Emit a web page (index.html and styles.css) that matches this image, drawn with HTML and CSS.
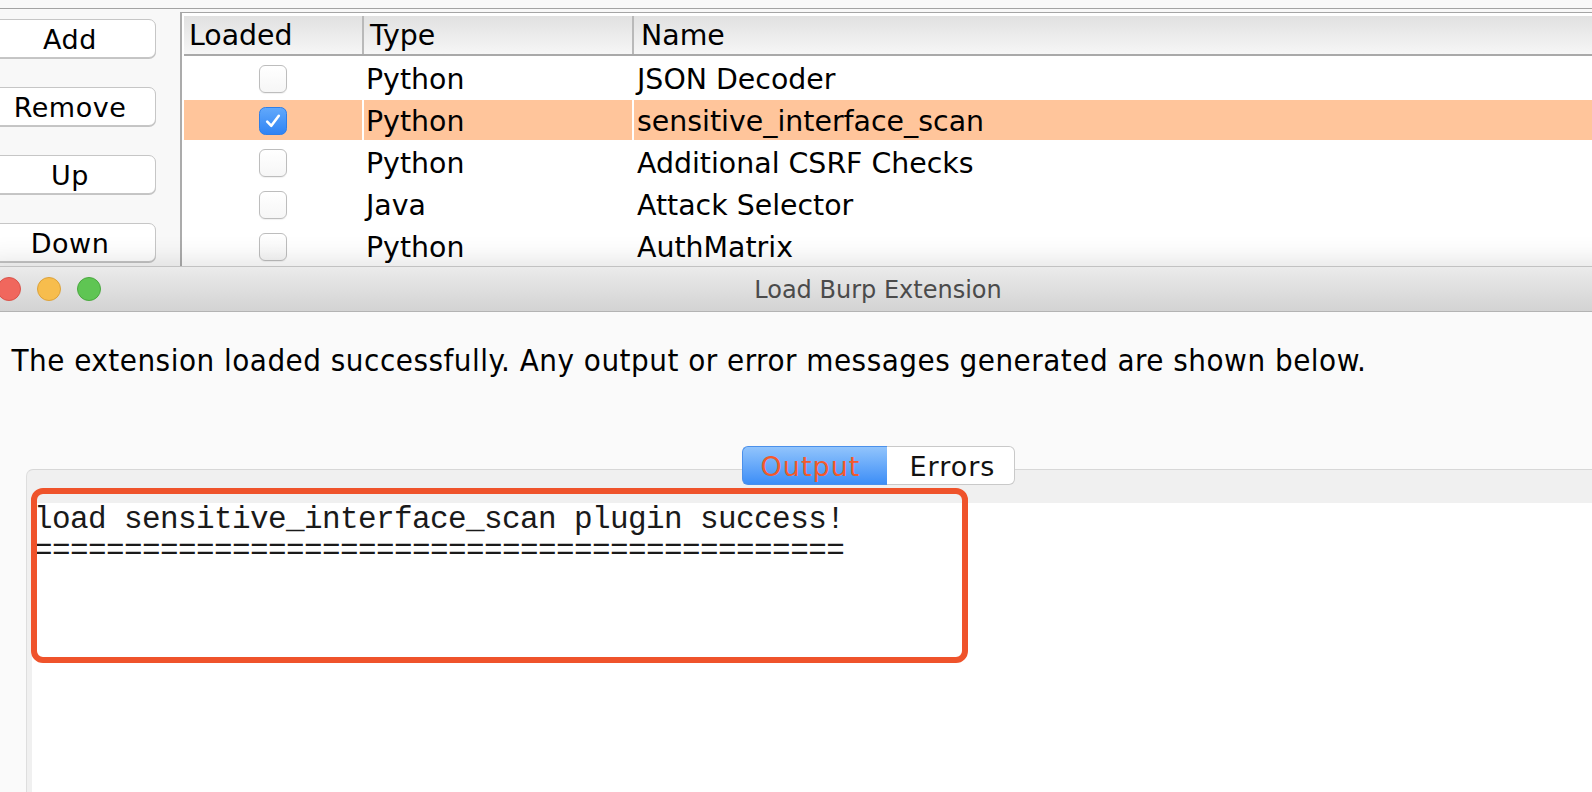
FILE: index.html
```html
<!DOCTYPE html>
<html>
<head>
<meta charset="utf-8">
<title>Burp Extensions</title>
<link rel="stylesheet" href="styles.css">
</head>
<body>
<div class="top">
  <div class="rule"></div>
  <div class="main">
    <div class="btncol">
      <div class="btn">Add</div>
      <div class="btn">Remove</div>
      <div class="btn">Up</div>
      <div class="btn">Down</div>
    </div>
    <div class="tablewrap">
      <div class="grid thead">
        <div class="th th-loaded">Loaded</div>
        <div class="th th-type">Type</div>
        <div class="th th-name">Name</div>
      </div>
      <div class="grid row">
        <div class="td chk"><span class="cb"></span></div>
        <div class="td type">Python</div>
        <div class="td name">JSON Decoder</div>
      </div>
      <div class="grid row sel">
        <div class="td chk"><svg class="cbx" width="28" height="28" viewBox="0 0 28 28"><defs><linearGradient id="g" x1="0" y1="0" x2="0" y2="1"><stop offset="0" stop-color="#62a9fb"/><stop offset="1" stop-color="#2f83f4"/></linearGradient></defs><rect x="0.5" y="0.5" width="27" height="27" rx="6" fill="url(#g)" stroke="#2f7fe8"/><path d="M8.2 14.6 L12.3 18.8 L19.8 8.8" fill="none" stroke="#fff" stroke-width="2.6" stroke-linecap="round" stroke-linejoin="round"/></svg></div>
        <div class="td type">Python</div>
        <div class="td name">sensitive_interface_scan</div>
      </div>
      <div class="grid row">
        <div class="td chk"><span class="cb"></span></div>
        <div class="td type">Python</div>
        <div class="td name">Additional CSRF Checks</div>
      </div>
      <div class="grid row">
        <div class="td chk"><span class="cb"></span></div>
        <div class="td type">Java</div>
        <div class="td name">Attack Selector</div>
      </div>
      <div class="grid row">
        <div class="td chk"><span class="cb"></span></div>
        <div class="td type">Python</div>
        <div class="td name">AuthMatrix</div>
      </div>
    </div>
  </div>
</div>
<div class="dialog">
  <div class="titlebar">
    <div class="lights">
      <span class="light red"></span>
      <span class="light yellow"></span>
      <span class="light green"></span>
    </div>
    <div class="title">Load Burp Extension</div>
    <div></div>
  </div>
  <p class="msg">The extension loaded successfully. Any output or error messages generated are shown below.</p>
  <div class="tabstrip">
    <div class="tab out">Output</div>
    <div class="tab err">Errors</div>
  </div>
  <div class="panel">
    <div class="textarea">
<pre>load sensitive_interface_scan plugin success!
=============================================</pre>
      <div class="annot"></div>
    </div>
  </div>
</div>
</body>
</html>
```

FILE: styles.css
```css
html, body {
  margin: 0;
  padding: 0;
}
body {
  width: 1592px;
  height: 792px;
  overflow: hidden;
  background: #f8f8f8;
  font-family: "DejaVu Sans", sans-serif;
  color: #000;
}

/* ---------- extension list ---------- */
.rule {
  height: 1px;
  margin-top: 8px;
  background: #a3a3a3;
}
.main {
  display: flex;
  height: 257px;
  overflow: hidden;
}
.btncol {
  flex: none;
  width: 196px;
  margin-left: -16px;
  padding-top: 10px;
  display: flex;
  flex-direction: column;
  gap: 29px;
}
.btn {
  width: 172px;
  height: 39px;
  box-sizing: border-box;
  border: 1px solid #c6c6c6;
  border-radius: 7px;
  background: #fff;
  box-shadow: 0 1px 0 #c4c4c4;
  font-size: 27px;
  letter-spacing: 0.5px;
  padding-top: 2px;
  line-height: 35px;
  text-align: center;
}
.tablewrap {
  flex: 1;
  margin-top: 3px;
  border-top: 1px solid #a5a5a5;
  border-left: 2px solid #ababab;
  padding: 3px 0 0 2px;
  background: #fff;
}
.grid {
  display: grid;
  grid-template-columns: 178px 268px 1fr;
  column-gap: 2px;
}
.thead {
  background: #b9b9b9;
  border-bottom: 2px solid #a9a9a9;
}
.th {
  height: 38px;
  box-sizing: border-box;
  background: linear-gradient(#e1e1e1, #f6f6f6);
  font-size: 28.4px;
  padding-top: 1px;
  line-height: 37px;
}
.th-loaded { padding-left: 5px; }
.th-type { padding-left: 6px; }
.th-name { padding-left: 7px; }

.row {
  background: #fff;
  padding-top: 2px;
}
.td {
  height: 40px;
  box-sizing: border-box;
  padding-top: 5px;
  line-height: 34px;
  font-size: 28.4px;
  white-space: nowrap;
}
.td.type { padding-left: 2px; }
.td.name { padding-left: 3px; }
.row.sel .td { background: #ffc59b; }
.td.chk {
  display: flex;
  align-items: center;
  justify-content: center;
  padding-top: 1px;
}
.cb {
  width: 28px;
  height: 28px;
  box-sizing: border-box;
  border: 1px solid #bdbdbd;
  border-radius: 6px;
  background: linear-gradient(#ffffff, #f6f6f6);
  box-shadow: 0 1px 1px rgba(0, 0, 0, 0.06);
}
.cbx { display: block; }

/* ---------- dialog ---------- */
.dialog {
  position: relative;
  margin-left: -18px;
  width: 1792px;
  height: 528px;
  border-top: 1px solid #c2c2c2;
  background: #fafafa;
  box-shadow: 0 -4px 26px rgba(0, 0, 0, 0.12);
}
.titlebar {
  height: 44px;
  border-bottom: 1px solid #b3b3b3;
  background: linear-gradient(#ebebeb, #d3d3d3);
  display: grid;
  grid-template-columns: 1fr auto 1fr;
  align-items: center;
}
.lights {
  display: flex;
  gap: 16px;
  padding-left: 14.5px;
}
.light {
  width: 24px;
  height: 24px;
  border-radius: 50%;
  box-sizing: border-box;
}
.light.red { background: #f0675d; border: 1px solid #d9534a; }
.light.yellow { background: #f7bd4d; border: 1px solid #dca23b; }
.light.green { background: #5fc553; border: 1px solid #4aa83f; }
.title {
  font-size: 24px;
  color: #4b4b4b;
  padding-top: 2px;
}
.msg {
  margin: 0;
  padding: 29.5px 0 0 29.5px;
  font-family: "DejaVu Sans Condensed", "DejaVu Sans", sans-serif;
  font-size: 31px;
  letter-spacing: 0.5px;
  line-height: 36px;
  white-space: nowrap;
}
.tabstrip {
  position: relative;
  z-index: 1;
  display: flex;
  justify-content: center;
  margin-top: 68.5px;
  margin-bottom: -16px;
}
.tab {
  height: 39px;
  box-sizing: border-box;
  font-size: 27px;
  letter-spacing: 1px;
  padding-top: 2px;
  line-height: 35px;
  text-align: center;
}
.tab.out {
  width: 145px;
  padding-right: 8px;
  border: 1px solid #4b90ea;
  border-right: none;
  border-radius: 6px 0 0 6px;
  background: linear-gradient(#91c4fc, #3d8ef7);
  color: #f35a2b;
}
.tab.err {
  width: 128px;
  padding-left: 5px;
  border: 1px solid #c9c9c9;
  border-left: none;
  border-radius: 0 6px 6px 0;
  background: #fff;
  color: #111;
}
.panel {
  margin: 0 44px;
  border-top: 1px solid #d7d7d7;
  border-left: 1px solid #dedede;
  border-radius: 7px 0 0 0;
  background: #f0f0f0;
  padding: 33px 0 0 5px;
}
.textarea {
  position: relative;
  height: 320px;
  background: #fff;
  padding: 1px 0 0 2px;
}
.textarea pre {
  margin: 0;
  font-family: "Liberation Mono", "Courier New", monospace;
  font-size: 31px;
  letter-spacing: -0.6px;
  line-height: 31px;
  color: #1a1a1a;
}
.annot {
  position: absolute;
  left: -1px;
  top: -15px;
  width: 937px;
  height: 175px;
  box-sizing: border-box;
  border: 6px solid #ef532b;
  border-radius: 12px;
}
```
